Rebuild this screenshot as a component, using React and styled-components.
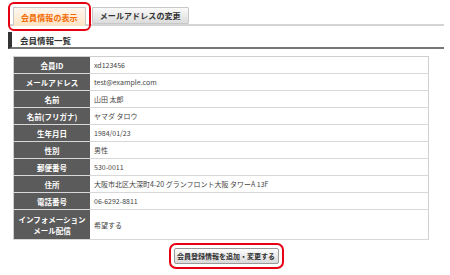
import styled, { createGlobalStyle } from "styled-components";

const GlobalStyle = createGlobalStyle`
  body {
    margin: 0;
    background: #fff;
    font-family: "Noto Sans CJK JP", "Liberation Sans", sans-serif;
    color: #333;
  }
`;

const rows = [
  { label: "会員ID", value: "xd123456" },
  { label: "メールアドレス", value: "test@example.com" },
  { label: "名前", value: "山田 太郎" },
  { label: "名前(フリガナ)", value: "ヤマダ タロウ" },
  { label: "生年月日", value: "1984/01/23" },
  { label: "性別", value: "男性" },
  { label: "郵便番号", value: "530-0011" },
  { label: "住所", value: "大阪市北区大深町4-20 グランフロント大阪 タワーA 13F" },
  { label: "電話番号", value: "06-6292-8811" },
  { label: ["インフォメーション", "メール配信"], value: "希望する", tall: true },
];

function App() {
  return (
    <>
      <GlobalStyle />
      <Page>
        <TabBar>
          <Tab $active $marked>会員情報の表示</Tab>
          <Tab>メールアドレスの変更</Tab>
        </TabBar>
        <SectionTitle>会員情報一覧</SectionTitle>
        <InfoTable>
          <tbody>
            {rows.map((r, i) => (
              <Row key={i} $tall={r.tall}>
                <HeadCell>
                  {Array.isArray(r.label)
                    ? r.label.map((l, j) => <div key={j}>{l}</div>)
                    : r.label}
                </HeadCell>
                <DataCell>{r.value}</DataCell>
              </Row>
            ))}
          </tbody>
        </InfoTable>
        <Actions>
          <SubmitButton>会員登録情報を追加・変更する</SubmitButton>
        </Actions>
      </Page>
    </>
  );
}

const Page = styled.div`
  width: 450px;
  height: 275px;
  padding: 0 6px 0 8px;
  box-sizing: border-box;
  overflow: hidden;
`;

const TabBar = styled.div`
  display: flex;
  align-items: flex-end;
  gap: 6px;
  padding: 8px 0 0 5px;
  height: 26px;
  box-sizing: border-box;
  border-bottom: 2px solid #d4d4d4;
`;

const Tab = styled.div`
  position: relative;
  height: ${(p) => (p.$active ? "19px" : "17px")};
  margin-bottom: ${(p) => (p.$active ? "-2px" : "0")};
  padding: 0 7px;
  display: flex;
  align-items: center;
  box-sizing: border-box;
  font-size: 8px;
  font-weight: bold;
  letter-spacing: 0.1px;
  color: ${(p) => (p.$active ? "#f26a00" : "#333")};
  background: ${(p) =>
    p.$active
      ? "linear-gradient(#fff8ef, #fde3c4)"
      : "linear-gradient(#fafafa, #dcdcdc)"};
  border: 1px solid #c8c8c8;
  border-bottom: ${(p) => (p.$active ? "none" : "1px solid #c8c8c8")};
  outline: ${(p) => (p.$marked ? "2px solid #e60012" : "none")};
  outline-offset: 3px;
  border-radius: 1px;
`;

const SectionTitle = styled.h2`
  margin: 6px 0 0;
  height: 17px;
  box-sizing: border-box;
  display: flex;
  align-items: center;
  padding-left: 8px;
  font-size: 8.5px;
  font-weight: bold;
  color: #333;
  border-left: 4px solid #333;
  border-bottom: 2px solid #777;
`;

const InfoTable = styled.table`
  margin: 7px 0 0 5px;
  width: 416px;
  border-collapse: collapse;
  border: 1px solid #cfcfcf;
`;

const Row = styled.tr`
  height: ${(p) => (p.$tall ? "30px" : "17px")};
`;

const HeadCell = styled.th`
  width: 76px;
  padding: 0;
  background: #5b5b5b;
  color: #fff;
  font-size: 7.5px;
  font-weight: bold;
  line-height: 11px;
  text-align: center;
  border-bottom: 1px solid #d8d8d8;
`;

const DataCell = styled.td`
  padding: 0 4px;
  font-size: 7px;
  color: #444;
  border-bottom: 1px solid #d8d8d8;
`;

const Actions = styled.div`
  display: flex;
  justify-content: center;
  margin-top: 8px;
`;

const SubmitButton = styled.button`
  height: 16px;
  width: 105px;
  padding: 0;
  font-family: inherit;
  font-size: 7px;
  font-weight: bold;
  color: #333;
  background: linear-gradient(#fdfdfd, #d9d9d9);
  border: 1px solid #999;
  border-radius: 2px;
  outline: 2px solid #e60012;
  outline-offset: 3px;
`;

export default App;
